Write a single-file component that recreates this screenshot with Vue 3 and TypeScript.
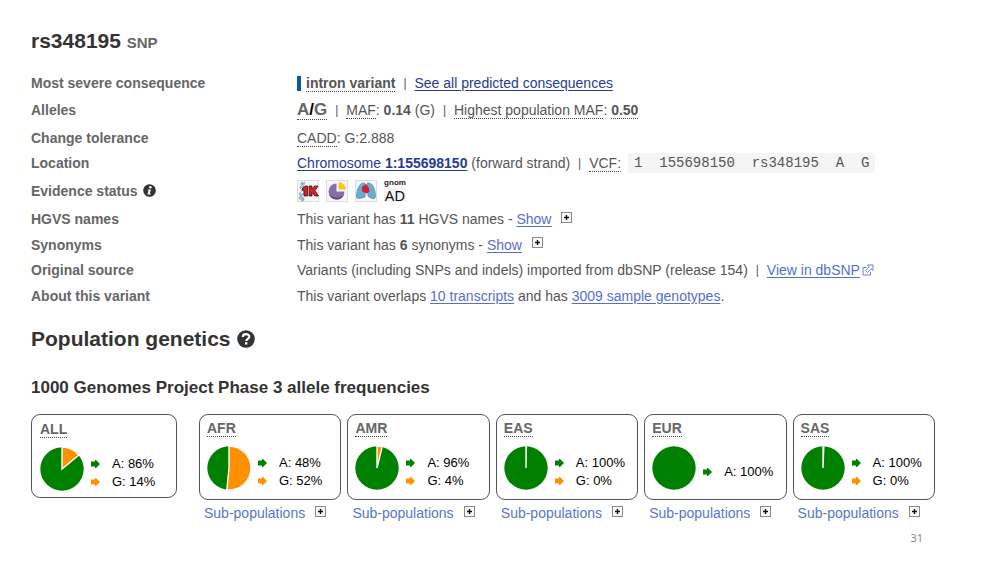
<script setup lang="ts">
interface Population {
  name: string
  a: number
  g: number
  // share of the pie taken by the G allele, 0 to 1; null when G is absent
  slice: number | null
}

const overall: Population = { name: 'ALL', a: 86, g: 14, slice: 0.14 }
const populations: Population[] = [
  { name: 'AFR', a: 48, g: 52, slice: 0.516 },
  { name: 'AMR', a: 96, g: 4, slice: 0.038 },
  { name: 'EAS', a: 100, g: 0, slice: 0.002 },
  { name: 'EUR', a: 100, g: 0, slice: null },
  { name: 'SAS', a: 100, g: 0, slice: 0.006 },
]
const cards = [overall, ...populations]
const vcf = ['1', '155698150', 'rs348195', 'A', 'G'].join('  ')

function slicePath(share: number): string {
  const angle = share * 2 * Math.PI
  const x = 22 + 22 * Math.sin(angle)
  const y = 22 - 22 * Math.cos(angle)
  return `M22 22V0A22 22 0 ${share > 0.5 ? 1 : 0} 1 ${x} ${y}Z`
}
</script>

<template>
  <main class="page">
    <h1>rs348195 <small>SNP</small></h1>

    <dl class="summary">
      <dt>Most severe consequence</dt>
      <dd>
        <i class="bar"></i><b class="hint">intron variant</b><span class="sep">|</span>
        <a class="dark" href="#consequences">See all predicted consequences</a>
      </dd>

      <dt>Alleles</dt>
      <dd>
        <b class="alleles hint">A<span class="slash">/</span>G</b><span class="sep">|</span>
        <span><span class="hint">MAF</span>: <b>0.14</b> (G)</span><span class="sep">|</span>
        <span><span class="hint">Highest population MAF</span>: <b class="hint">0.50</b></span>
      </dd>

      <dt>Change tolerance</dt>
      <dd><span><span class="hint">CADD</span>: G:2.888</span></dd>

      <dt>Location</dt>
      <dd>
        <span><a class="dark" href="#location">Chromosome <b>1:155698150</b></a> (forward strand)</span><span class="sep">|</span>
        <span class="hint">VCF:</span><code>{{ vcf }}</code>
      </dd>

      <dt>
        Evidence status
        <svg class="info" width="13" height="13" viewBox="0 0 13 13" aria-hidden="true">
          <circle cx="6.5" cy="6.5" r="6.3" fill="#333" />
          <circle cx="7.4" cy="3.2" r="1.2" fill="#fff" />
          <path d="M4.7 5.4H7.9L6.7 9.6H7.8L7.5 10.5H4.4L5.6 6.3H4.5Z" fill="#fff" />
        </svg>
      </dt>
      <dd class="evidence">
        <svg width="22" height="22" viewBox="0 0 22 22" role="img" aria-label="1000 Genomes">
          <rect x=".5" y=".5" width="21" height="21" fill="#f8f8f8" stroke="#ddd" />
          <path d="M4 2C10 4 0 6 4 9S9 13 4 16S4 19 7 20M8 2C2 5 10 7 6 10S1 14 5 17S7 19 4 21M3 4H8M3 7H7M3 14H8M3 18H7" fill="none" stroke="#7997bd" />
          <path d="M5.5 8L8.5 6H10.5V16H7V10L5.5 10.5Z" fill="#e51c23" stroke="#222" stroke-width=".8" />
          <path d="M12 6H15V9L17.5 6H21L18 10.5L21.5 16H18L15 12.5V16H12Z" fill="#e51c23" stroke="#222" stroke-width=".8" />
        </svg>
        <svg width="22" height="22" viewBox="0 0 22 22" role="img" aria-label="Frequency">
          <rect x=".5" y=".5" width="21" height="21" fill="#f8f8f8" stroke="#ddd" />
          <path d="M10.5 3.5V11.5H18.5A8 8 0 1 1 10.5 3.5Z" fill="#8471a8" />
          <path d="M3 14A8 8 0 0 0 18 14.5A10 10 0 0 1 3 14Z" fill="#5e4a80" />
          <path d="M12.5 2A8 8 0 0 1 20 9.5H12.5Z" fill="#fbc51b" />
        </svg>
        <svg width="22" height="22" viewBox="0 0 22 22" role="img" aria-label="Phenotype or disease">
          <rect x=".5" y=".5" width="21" height="21" fill="#f8f8f8" stroke="#ddd" />
          <path d="M9.5 3C5 2 1.5 9 1.5 16.5C2 20 6 18 10 17L10.5 5Z" fill="#68acd0" stroke="#4789b3" stroke-width=".7" />
          <path d="M12.5 3C17 2 20.5 9 20.5 16.5C20 20 16.5 19 13 16L12 5Z" fill="#68acd0" stroke="#4789b3" stroke-width=".7" />
          <path d="M7 7L11 4L14 8L14.5 11.5L12 13.5L7 11.5Z" fill="#d5202b" />
        </svg>
        <svg width="22" height="22" viewBox="0 0 22 22" role="img" aria-label="gnomAD">
          <rect y="8" width="22" height="14" fill="#f4f4f4" />
          <text class="gnom" x="11" y="5" text-anchor="middle">gnom</text>
          <text class="ad" x="11" y="21" text-anchor="middle">AD</text>
        </svg>
      </dd>

      <dt>HGVS names</dt>
      <dd>
        <span>This variant has <b>11</b> HGVS names - <a href="#hgvs">Show</a></span>
        <svg class="plus" width="11" height="11" viewBox="0 0 11 11" aria-hidden="true"><rect x=".5" y=".5" width="10" height="10" fill="#f8f8f8" stroke="#888" /><path d="M3 5.5H8M5.5 3V8" stroke="#111" stroke-width="1.4" /></svg>
      </dd>

      <dt>Synonyms</dt>
      <dd>
        <span>This variant has <b>6</b> synonyms - <a href="#synonyms">Show</a></span>
        <svg class="plus" width="11" height="11" viewBox="0 0 11 11" aria-hidden="true"><rect x=".5" y=".5" width="10" height="10" fill="#f8f8f8" stroke="#888" /><path d="M3 5.5H8M5.5 3V8" stroke="#111" stroke-width="1.4" /></svg>
      </dd>

      <dt>Original source</dt>
      <dd>
        <span>Variants (including SNPs and indels) imported from dbSNP (release 154)</span><span class="sep">|</span>
        <a href="#dbsnp">View in dbSNP</a>
        <svg class="external" width="12" height="12" viewBox="0 0 12 12" fill="none" stroke="#6b80cc" aria-hidden="true">
          <path d="M4.5 3.5H1V11H8.5V8" />
          <path d="M5.5 1H11V6.5L9.2 4.8L5.5 8.5L3.6 6.6L7.3 2.9Z" fill="#fff" />
        </svg>
      </dd>

      <dt>About this variant</dt>
      <dd>
        <span>This variant overlaps <a href="#transcripts">10 transcripts</a> and has <a href="#genotypes">3009 sample genotypes</a>.</span>
      </dd>
    </dl>

    <h2>
      Population genetics
      <svg width="18" height="18" viewBox="0 0 18 18" aria-hidden="true">
        <circle cx="9" cy="9" r="8.8" fill="#333" />
        <path d="M5.8 7C5.8 3.2 12.3 3.2 12.3 6.8C12.3 9 9.3 8.8 9.2 11" fill="none" stroke="#fff" stroke-width="2.2" />
        <rect x="8" y="12.2" width="2.4" height="2.3" fill="#fff" />
      </svg>
    </h2>
    <h3>1000 Genomes Project Phase 3 allele frequencies</h3>

    <div class="populations">
      <section v-for="(p, i) in cards" :key="p.name" :class="{ overall: i === 0 }">
        <div class="card">
          <b class="name hint">{{ p.name }}</b>
          <div class="chart">
            <svg width="44" height="44" viewBox="0 0 44 44" aria-hidden="true">
              <circle cx="22" cy="22" r="21.7" fill="#008000" />
              <path v-if="p.slice !== null" :d="slicePath(p.slice)" fill="#ff9100" stroke="#fff" stroke-width="1.4" />
            </svg>
            <ul>
              <li>
                <svg width="9" height="8" viewBox="0 0 9 8" aria-hidden="true"><path d="M0 1.5H4V0H5L9 4L5 8H4V6.5H0Z" fill="#008000" /></svg>A: {{ p.a }}%
              </li>
              <li v-if="p.slice !== null">
                <svg width="9" height="8" viewBox="0 0 9 8" aria-hidden="true"><path d="M0 1.5H4V0H5L9 4L5 8H4V6.5H0Z" fill="#ff9100" /></svg>G: {{ p.g }}%
              </li>
            </ul>
          </div>
        </div>
        <button v-if="i > 0" type="button">
          Sub-populations
          <svg class="plus" width="11" height="11" viewBox="0 0 11 11" aria-hidden="true"><rect x=".5" y=".5" width="10" height="10" fill="#f8f8f8" stroke="#888" /><path d="M3 5.5H8M5.5 3V8" stroke="#111" stroke-width="1.4" /></svg>
        </button>
      </section>
    </div>

    <footer>31</footer>
  </main>
</template>

<style>
body {
  background: #fff;
}
</style>

<style scoped>
.page {
  padding: 27px 65px 16px 31px;
  color: #555;
  font: 14px/20px "Liberation Sans", Arial, sans-serif;
}
h1,
h2,
h3 {
  margin: 0;
  color: #333;
}
h1,
h2 {
  font-size: 21px;
  line-height: 28px;
}
h1 small {
  color: #666;
  font-size: 15px;
}
h2 {
  display: flex;
  align-items: center;
  gap: 6px;
  margin-top: 16px;
}
h3 {
  margin: 23px 0 14px;
  font-size: 17px;
  line-height: 24px;
}
.summary {
  display: grid;
  grid-template-columns: 266px 1fr;
  grid-template-rows: 26px 28px 27px 24px 31px 26px 25px 26px 26px;
  align-items: center;
  margin: 13px 0 0;
  white-space: nowrap;
}
dt {
  display: flex;
  align-items: center;
  gap: 5px;
  color: #666;
  font-weight: bold;
}
dd {
  display: flex;
  align-items: center;
  margin: 0;
}
a {
  color: #5570cc;
  text-underline-offset: 2px;
}
a.dark {
  color: #253c91;
}
.hint {
  border-bottom: 1px dotted #444;
  line-height: 16px;
}
.sep {
  width: 19px;
  font-size: 12px;
  text-align: center;
}
.bar {
  width: 4px;
  height: 15px;
  margin-right: 5px;
  background: #0b5a9e;
}
.alleles {
  color: #666;
  font-size: 17px;
  line-height: 18px;
}
.slash {
  color: #000;
}
code {
  margin-left: 7px;
  padding: 0 6px;
  background: #f5f5f5;
  font: 14px/20px "Liberation Mono", monospace;
  white-space: pre;
}
.evidence {
  gap: 7px;
}
.evidence svg {
  overflow: visible;
}
.gnom {
  fill: #222;
  font: bold 8px "Liberation Sans", sans-serif;
}
.ad {
  fill: #111;
  font: 15px "Noto Sans", sans-serif;
}
.summary .plus {
  margin: 0 0 4px 10px;
}
.external {
  margin-left: 2px;
}
.populations {
  display: grid;
  grid-template-columns: 162px repeat(5, 1fr);
  column-gap: 6px;
  margin-top: 14px;
}
.card {
  padding: 3px 7px 9px;
  border: 1px solid #555;
  border-radius: 9px;
}
.overall .card {
  margin-right: 16px;
  padding: 4px 8px 6px;
}
.name {
  display: block;
  width: fit-content;
  margin-top: 3px;
  color: #666;
  line-height: 15px;
}
.chart {
  display: flex;
  gap: 7px;
  margin-top: 9px;
}
ul {
  display: flex;
  flex-direction: column;
  justify-content: center;
  margin: 0;
  padding: 8px 0 0;
  color: #000;
  font-size: 13px;
  line-height: 18px;
  list-style: none;
  white-space: nowrap;
}
li {
  display: flex;
  align-items: center;
  gap: 12px;
}
button {
  display: flex;
  align-items: center;
  gap: 10px;
  margin-top: 3px;
  padding: 0 0 0 5px;
  border: 0;
  background: none;
  color: #5b74cc;
  font: inherit;
  white-space: nowrap;
}
button .plus {
  margin-bottom: 3px;
}
footer {
  margin-top: 7px;
  padding-right: 12px;
  color: #888;
  font: 11px/16px "Noto Sans", sans-serif;
  text-align: right;
}
</style>
